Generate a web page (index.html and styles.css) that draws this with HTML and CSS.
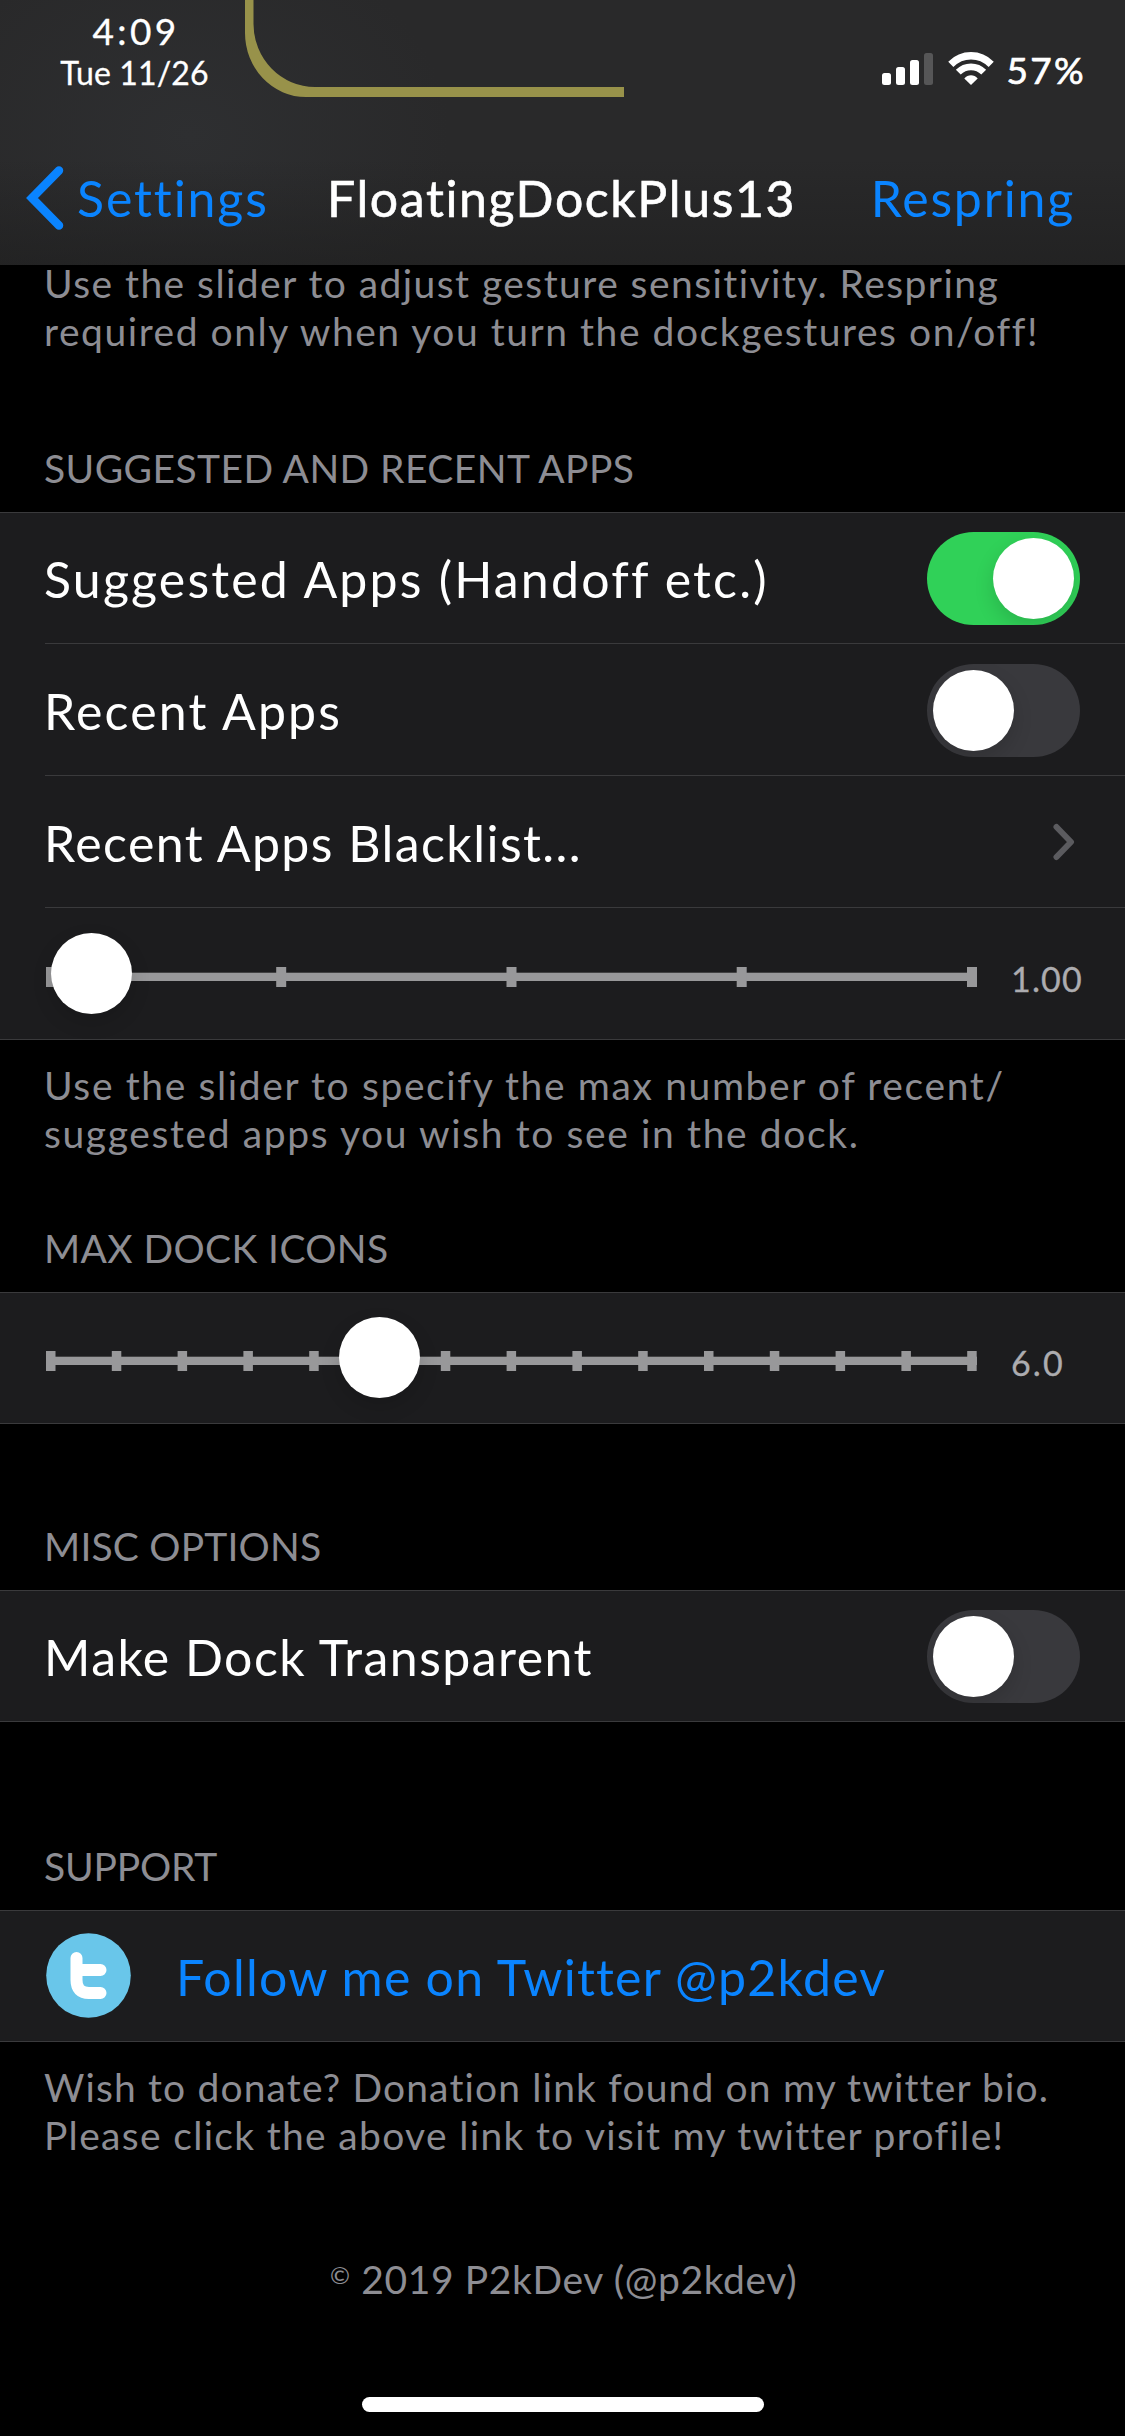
FILE: index.html
```
<!DOCTYPE html>
<html lang="en">
<head>
<meta charset="utf-8">
<title>FloatingDockPlus13</title>
<link rel="stylesheet" href="styles.css">
</head>
<body>
<div class="screen">
  <header class="header">
    <div class="status">
      <div class="clock">
        <div class="time">4:09</div>
        <div class="date">Tue 11/26</div>
      </div>
      <div class="indicators">
        <svg class="signal" width="51" height="32" viewBox="0 0 51 32" fill="#fff">
          <rect x="0" y="20" width="9" height="12" rx="2.5"/>
          <rect x="14" y="14" width="9" height="18" rx="2.5"/>
          <rect x="28" y="7" width="9" height="25" rx="2.5"/>
          <rect x="42" y="0" width="9" height="32" rx="2.5" fill="#565657"/>
        </svg>
        <svg class="wifi" width="46" height="33" viewBox="0 0 46 33">
          <path d="M2.800 12.300C14.300 .900 31.700 .900 43.200 12.300" fill="none" stroke="#fff" stroke-width="7.300"/>
          <path d="M10.300 20.200C17.400 13 28.600 13 35.700 20.200" fill="none" stroke="#fff" stroke-width="6.800"/>
          <path d="M23 33L16.300 26.500C20 22.300 26 22.300 29.700 26.500Z" fill="#fff"/>
        </svg>
        <span class="battery">57%</span>
      </div>
    </div>
    <svg class="outline" width="380" height="98" viewBox="0 0 380 98">
      <path d="M0 0H8.500V24A61.500 63 0 0 0 70 87H379V97H61A61 64 0 0 1 0 33Z" fill="#98924a"/>
    </svg>
    <nav class="nav">
      <a class="back">
        <svg width="38" height="66" viewBox="0 0 38 66"><path d="M33 5.500L6 33L33 60.500" fill="none" stroke="#0a84ff" stroke-width="8.500" stroke-linecap="round" stroke-linejoin="miter"/></svg>
        <span class="back-text">Settings</span>
      </a>
      <h1 class="title">FloatingDockPlus13</h1>
      <a class="action">Respring</a>
    </nav>
  </header>

  <main>
    <p class="note first"><span class="s142">Use the slider to adjust gesture sensitivity. Respring</span><br><span class="s154">required only when you turn the dockgestures on/off!</span></p>

    <h2 class="heading suggested">SUGGESTED AND RECENT APPS</h2>
    <section class="group">
      <div class="row lined">
        <span class="label s220">Suggested Apps (Handoff etc.)</span>
        <span class="switch on"><i class="knob"></i></span>
      </div>
      <div class="row lined">
        <span class="label s220">Recent Apps</span>
        <span class="switch"><i class="knob"></i></span>
      </div>
      <div class="row lined">
        <span class="label s145">Recent Apps Blacklist...</span>
        <svg class="chevron" width="22" height="38" viewBox="0 0 22 38"><path d="M3.500 4L18 19L3.500 34" fill="none" stroke="#5b5b5f" stroke-width="6" stroke-linecap="round" stroke-linejoin="round"/></svg>
      </div>
      <div class="row">
        <div class="slider">
          <svg width="931" height="20" viewBox="0 0 931 20" fill="#98989a">
            <rect x="0" y="5.700" width="931" height="8.300"/>
            <rect x="0" width="10" height="20"/><rect x="230.200" width="10" height="20"/><rect x="460.500" width="10" height="20"/><rect x="690.700" width="10" height="20"/><rect x="921" width="10" height="20"/>
          </svg>
          <i class="thumb" style="left:5px"></i>
        </div>
        <span class="value s118">1.00</span>
      </div>
    </section>
    <p class="note"><span class="s160">Use the slider to specify the max number of recent/</span><br><span class="s160">suggested apps you wish to see in the dock.</span></p>

    <h2 class="heading dock">MAX DOCK ICONS</h2>
    <section class="group">
      <div class="row">
        <div class="slider">
          <svg width="931" height="20" viewBox="0 0 931 20" fill="#98989a">
            <rect x="0" y="5.700" width="931" height="8.300"/>
            <rect x="0" width="9.500" height="20"/><rect x="65.800" width="9.500" height="20"/><rect x="131.600" width="9.500" height="20"/><rect x="197.400" width="9.500" height="20"/><rect x="263.200" width="9.500" height="20"/><rect x="329" width="9.500" height="20"/><rect x="394.800" width="9.500" height="20"/><rect x="460.600" width="9.500" height="20"/><rect x="526.400" width="9.500" height="20"/><rect x="592.200" width="9.500" height="20"/><rect x="658" width="9.500" height="20"/><rect x="723.800" width="9.500" height="20"/><rect x="789.600" width="9.500" height="20"/><rect x="855.400" width="9.500" height="20"/><rect x="921.200" width="9.500" height="20"/>
          </svg>
          <i class="thumb" style="left:293px"></i>
        </div>
        <span class="value s213">6.0</span>
      </div>
    </section>

    <h2 class="heading misc">MISC OPTIONS</h2>
    <section class="group">
      <div class="row">
        <span class="label s145">Make Dock Transparent</span>
        <span class="switch"><i class="knob"></i></span>
      </div>
    </section>

    <h2 class="heading support">SUPPORT</h2>
    <section class="group">
      <div class="row">
        <svg class="twitter" width="85" height="85" viewBox="0 0 85 85">
          <circle cx="42.500" cy="42.500" r="42.300" fill="#69c6ea"/>
          <path d="M30.500 25V47Q30.500 60 43 60H54.500M30.500 37H54.500" fill="none" stroke="#fff" stroke-width="12" stroke-linecap="round"/>
        </svg>
        <a class="label link">Follow me on Twitter @p2kdev</a>
      </div>
    </section>
    <p class="note"><span class="s115">Wish to donate? Donation link found on my twitter bio.</span><br><span class="s130">Please click the above link to visit my twitter profile!</span></p>
  </main>

  <footer class="copyright"><span class="mark">©</span> 2019 P2kDev (@p2kdev)</footer>
  <div class="home"></div>
</div>
</body>
</html>
```
FILE: styles.css
```
* { box-sizing: border-box; }
body { margin: 0; background: #000; }
.screen {
  width: 1125px;
  height: 2436px;
  overflow: hidden;
  display: flex;
  flex-direction: column;
  background: #000;
  color: #fff;
  font-family: Lato, "Liberation Sans", sans-serif;
}
h1, h2, p { margin: 0; font-weight: 400; }

/* Header */
.header {
  position: relative;
  z-index: 2;
  flex: none;
  height: 265px;
  background:
    linear-gradient(to bottom, rgba(30,30,30,0) 60%, rgba(30,30,30,.6) 100%),
    radial-gradient(ellipse 260px 200px at 190px 135px, #2e2f31 0%, rgba(46,47,49,0) 100%),
    #29292a;
}
.status {
  height: 132px;
  display: flex;
  justify-content: space-between;
}
.clock {
  width: 269px;
  padding-top: 8px;
  text-align: center;
  -webkit-text-stroke: .3px #fff;
}
.time { font-size: 37px; line-height: 45px; letter-spacing: 3.4px; padding-left: 3px; }
.date { font-size: 32px; line-height: 39px; letter-spacing: .15px; }
.indicators {
  display: flex;
  align-items: flex-start;
  width: 243px;
}
.signal { margin-top: 53px; }
.wifi { margin: 52px 0 0 15px; }
.battery {
  margin: 47px 0 0 12.5px;
  font-size: 37px;
  line-height: 45px;
  letter-spacing: 2.3px;
  -webkit-text-stroke: .7px #fff;
}
.outline { position: absolute; left: 245px; top: 0; }
.nav {
  height: 131px;
  padding: 0 50px 0 26px;
  display: flex;
  align-items: center;
  font-size: 50px;
  line-height: 60px;
}
.back { display: flex; align-items: center; width: 301px; color: #0a84ff; }
.back-text { padding-left: 13px; letter-spacing: 1.9px; }
.title { font-size: 50px; letter-spacing: 1.6px; -webkit-text-stroke: .6px #fff; }
.action { margin-left: auto; color: #0a84ff; letter-spacing: 1.8px; }

/* Notes and headings */
.note, .heading {
  padding-left: 44px;
  font-size: 39px;
  line-height: 48px;
  color: #8d8d93;
  white-space: nowrap;
}
.note { margin-top: 21px; }
.note.first { margin-top: -6px; }
.heading { margin-bottom: 20px; }
.suggested { margin-top: 89px; letter-spacing: .42px; }
.dock { margin-top: 67px; letter-spacing: .38px; }
.misc { margin-top: 98px; letter-spacing: .19px; }
.support { margin-top: 120px; letter-spacing: -.2px; }

/* Groups */
.group {
  background: #1c1c1e;
  border-top: 1px solid #3a3a3c;
  border-bottom: 1px solid #3a3a3c;
}
.row {
  position: relative;
  height: 131px;
  padding: 0 45px 0 44px;
  display: flex;
  align-items: center;
}
.row:first-child { height: 130px; }
.row.lined { height: 132px; }
.row.lined:first-child { height: 131px; }
.lined { box-shadow: inset 0 -1px #3a3a3c; }
.lined::before {
  content: "";
  position: absolute;
  left: 0;
  bottom: 0;
  width: 45px;
  height: 1px;
  background: #1c1c1e;
}
.label { padding-top: 1px; font-size: 50px; line-height: 60px; white-space: nowrap; }
.switch {
  flex: none;
  display: flex;
  width: 153px;
  height: 93px;
  padding: 6px;
  margin-left: auto;
  border-radius: 47px;
  background: #39393d;
  overflow: hidden;
}
.switch.on { background: #30d158; justify-content: flex-end; }
.knob, .thumb {
  width: 81px;
  height: 81px;
  border-radius: 50%;
  background: #fff;
  box-shadow: 0 8px 20px rgba(0,0,0,.14);
}
.chevron { margin-left: auto; margin-right: 5px; }
.slider {
  position: relative;
  width: 931px;
  height: 81px;
  margin-left: 2px;
  flex: none;
}
.row:first-child .slider { margin-bottom: 1px; }
.slider svg { display: block; margin-top: 34px; }
.thumb { position: absolute; top: 0; }
.value {
  margin: 9px 0 0 34px;
  font-size: 34px;
  line-height: 41px;
  color: #acacb0;
  -webkit-text-stroke: .3px #acacb0;
}
.twitter { margin: 0 0 1px 2px; flex: none; }
.link { padding-left: 45px; color: #0a84ff; letter-spacing: 1.22px; }

/* Tracking */
.s115 { letter-spacing: 1.15px; }
.s118 { letter-spacing: 1.18px; }
.s130 { letter-spacing: 1.32px; }
.s142 { letter-spacing: 1.44px; }
.s145 { letter-spacing: 1.45px; }
.s154 { letter-spacing: 1.54px; }
.s160 { letter-spacing: 1.62px; }
.s213 { letter-spacing: 2.13px; }
.s220 { letter-spacing: 2.2px; }

/* Bottom */
.copyright {
  margin-top: 96px;
  padding-left: 330px;
  font-size: 39px;
  line-height: 48px;
  letter-spacing: .62px;
  color: #8d8d93;
  white-space: nowrap;
}
.mark { font-size: 24px; line-height: 0; position: relative; top: -10px; }
.home {
  width: 402px;
  height: 15px;
  margin: 94px 0 0 362px;
  border-radius: 8px;
  background: #fff;
}
```
